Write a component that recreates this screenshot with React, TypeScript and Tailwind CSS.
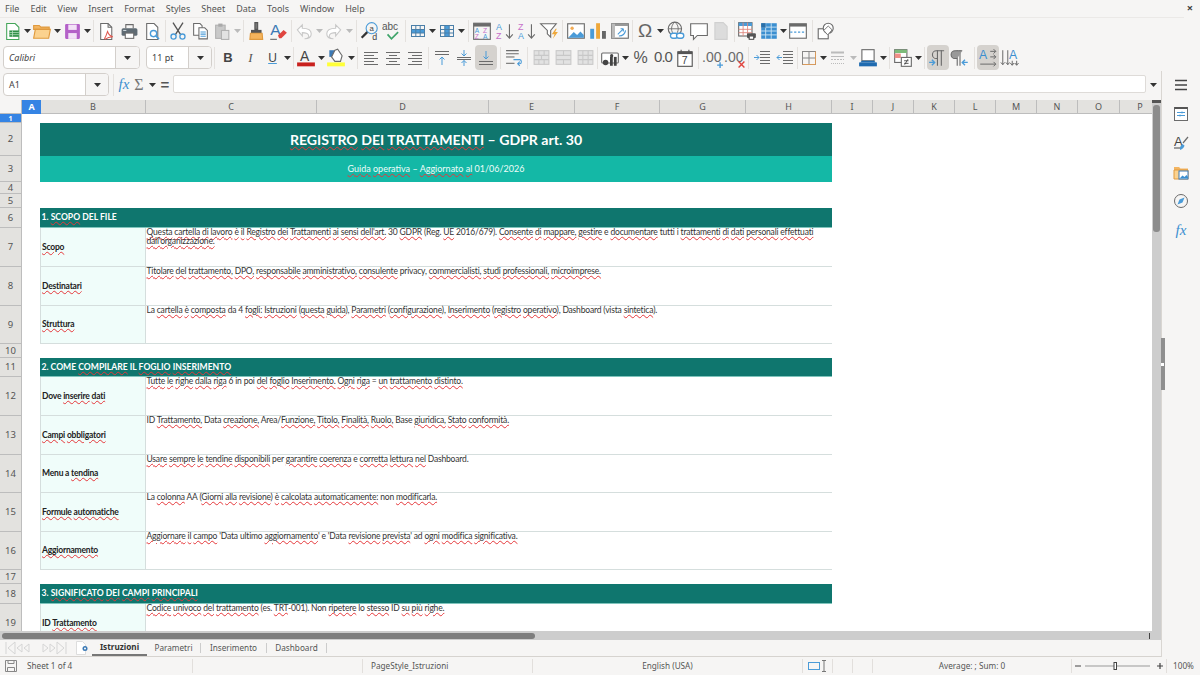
import type { ReactNode } from 'react';

// spell-checked text: {word} gets the red wavy underline
function Spell({ text }: { text: string }) {
  const parts = text.split(/(\{[^}]*\})/);
  return (
    <>
      {parts.map((p, i) =>
        p.startsWith('{') ? (
          <span key={i} className="underline decoration-wavy decoration-[#e5383b] decoration-[1px] underline-offset-[1px]">
            {p.slice(1, -1)}
          </span>
        ) : (
          <span key={i}>{p}</span>
        ),
      )}
    </>
  );
}

function Ic({ children, s = 18 }: { children: ReactNode; s?: number }) {
  return (
    <svg width={s} height={s} viewBox="0 0 18 18" fill="none" strokeWidth="1">
      {children}
    </svg>
  );
}

function Caret({ c = '#333' }: { c?: string }) {
  return (
    <svg width="7" height="4" viewBox="0 0 7 4">
      <path d="M0 0h7L3.5 4z" fill={c} />
    </svg>
  );
}

function Tool({ children, w = 'w-[22px]', on }: { children: ReactNode; w?: string; on?: boolean }) {
  return (
    <div className={`${w} h-[25px] shrink-0 flex items-center justify-center rounded-[4px] ${on ? 'bg-[#d5d2ce]' : ''}`}>
      {children}
    </div>
  );
}

function Arrow({ w = 'w-[8px]', c }: { w?: string; c?: string }) {
  return (
    <div className={`${w} h-[25px] shrink-0 flex items-center justify-center`}>
      <Caret c={c} />
    </div>
  );
}

function Sep({ w }: { w: string }) {
  return (
    <div className={`${w} h-[25px] shrink-0 flex items-center justify-center`}>
      <div className="w-px h-[22px] bg-[#e4e1de]" />
    </div>
  );
}

// ── icon drawings ───────────────────────────────────────────────────────
const G = '#6b6b6b';
const B = '#4a9bd8';

function Lines({ ys, x1 = 2, x2 = 16, c = G }: { ys: number[]; x1?: number; x2?: number; c?: string }) {
  return <path d={ys.map((y) => `M${x1} ${y + 0.5}H${x2}`).join('')} stroke={c} />;
}

function GridIc({ fill, c = G }: { fill?: ReactNode; c?: string }) {
  return (
    <Ic>
      {fill}
      <rect x="2.5" y="3.5" width="13" height="11" stroke={c} />
      <path d="M2.5 7.5h13M2.5 11h13M6.8 3.5v11M11.2 3.5v11" stroke={c} />
    </Ic>
  );
}

const NewSheet = () => (
  <Ic s={19}>
    <path d="M3.5 1.5h8l3.500 3.500v11.500h-11.500z" stroke="#43a558" fill="#fff" />
    <rect x="6" y="8" width="9" height="6" fill="#2f8f46" />
    <path d="M6 10h9M6 12h9M9 8v6" stroke="#bde3c6" strokeWidth=".7" />
  </Ic>
);
const Folder = () => (
  <Ic s={20}>
    <path d="M1.500 4h5l1.500 1.500h7.500v2h-14z" fill="#f3b562" stroke="#e09a3e" />
    <path d="M1.500 15.500l1.500-8h13.500l-1.500 8z" fill="#fbd28f" stroke="#e09a3e" />
  </Ic>
);
const Save = () => (
  <Ic s={19}>
    <rect x="2" y="2" width="14" height="14" rx="1" fill="#b461c8" />
    <rect x="5" y="2.500" width="8" height="5" fill="#f3e2f7" />
    <rect x="5" y="10.500" width="8" height="5.500" fill="#f3e2f7" />
  </Ic>
);
const Pdf = () => (
  <Ic s={19}>
    <path d="M3.500 1.500h7l3.500 3.500v11.500h-10.500z" stroke={G} fill="#fff" />
    <path d="M10.500 1.500v3.500h3.500" stroke={G} />
    <path d="M7 16c2-3 2.500-6 3-7 1 3 2.500 4.500 5 5-3 0-5 .5-7.500 2.500" stroke="#e0584f" />
  </Ic>
);
const Printer = () => (
  <Ic s={19}>
    <path d="M5.500 6V2.500h7V6" stroke={G} />
    <rect x="1.500" y="6" width="15" height="7" rx="1.500" fill="#5f6b73" />
    <rect x="5" y="10.500" width="8" height="5" fill="#fff" stroke={G} />
    <path d="M3 8h3" stroke="#cfd8dc" />
  </Ic>
);
const Preview = () => (
  <Ic s={19}>
    <path d="M3.500 1.500h7l3.500 3.500v11.500h-10.500z" stroke={G} fill="#fff" />
    <circle cx="10" cy="11" r="3" stroke={B} strokeWidth="1.300" />
    <path d="M12.200 13.200l3 3" stroke={B} strokeWidth="1.500" />
  </Ic>
);
const Cut = () => (
  <Ic s={20}>
    <path d="M4.500 1.500l7 11M13.500 1.500l-7 11" stroke="#555" strokeWidth="1.200" />
    <circle cx="5" cy="14" r="2.300" stroke={B} strokeWidth="1.200" />
    <circle cx="13" cy="14" r="2.300" stroke={B} strokeWidth="1.200" />
  </Ic>
);
const Copy = () => (
  <Ic s={19}>
    <path d="M2.500 1.500h6l2 2v9h-8z" stroke={G} fill="#fff" />
    <path d="M7.500 5.500h5.500l2.500 2.500v8h-8z" stroke={G} fill="#fff" />
    <Lines ys={[9, 11, 13]} x1={9} x2={14} c={B} />
  </Ic>
);
const Paste = () => (
  <Ic s={19}>
    <rect x="2.500" y="3" width="9" height="12.500" fill="#c9c9c9" stroke="#b0b0b0" />
    <rect x="5" y="1.500" width="4" height="3" fill="#aaa" />
    <rect x="8" y="8" width="7" height="8.500" fill="#e2e2e2" stroke="#b0b0b0" />
  </Ic>
);
const Brush = () => (
  <Ic s={20}>
    <path d="M8 1.500h2.500v6H8z" fill="#777" stroke="#555" />
    <path d="M4.500 8h9.500v3h-9.500z" fill="#555" />
    <path d="M4 11h10.500l.5 5.500h-11.500z" fill="#f5b45c" stroke="#e09a3e" />
  </Ic>
);
const Clear = () => (
  <Ic s={20}>
    <text x="2" y="13" fontSize="14" fontFamily="Liberation Sans" fill="#3b79b5">A</text>
    <path d="M2 16.500h6" stroke={G} />
    <path d="M9 13l5-5 3 2.500-5 5h-2z" fill="#e0453f" />
  </Ic>
);
const Undo = () => (
  <Ic s={20}>
    <path d="M3 8l4.500-4.500v3c5 0 8 1.500 8 5s-2.500 4.500-6 4.500c3 0 4.500-1.500 3.500-3.500-.8-1.500-3-2-5.500-2v3z" stroke="#c8c8c8" fill="#fff" />
  </Ic>
);
const Redo = () => (
  <Ic s={20}>
    <path d="M15 8l-4.500-4.500v3c-5 0-8 1.500-8 5s2.500 4.500 6 4.500c-3 0-4.500-1.500-3.500-3.500.8-1.500 3-2 5.500-2v3z" stroke="#c8c8c8" fill="#fff" />
  </Ic>
);
const Find = () => (
  <Ic s={20}>
    <circle cx="10.500" cy="6.500" r="5" stroke={B} />
    <path d="M6.500 10l-5 5" stroke="#333" strokeWidth="2" />
    <text x="8.500" y="9" fontSize="7" fontFamily="Liberation Sans" fill="#444">a</text>
    <text x="11" y="17" fontSize="8" fontFamily="Liberation Sans" fill="#444">d</text>
  </Ic>
);
const SpellIc = () => (
  <Ic s={20}>
    <text x="0" y="8" fontSize="9" fontFamily="Liberation Sans" fill="#555">abc</text>
    <path d="M5 12l3.500 4 6-6" stroke="#3fa46a" strokeWidth="1.500" />
  </Ic>
);
const Rows = () => <GridIc fill={<rect x="2.500" y="7.500" width="13" height="3.500" fill={B} />} c="#4b7fa8" />;
const Cols = () => <GridIc fill={<rect x="6.800" y="3.500" width="4.400" height="11" fill={B} />} c="#4b7fa8" />;
const Sort = () => (
  <Ic s={20}>
    <rect x="1.500" y="2" width="15" height="14.500" stroke={G} />
    <rect x="1.500" y="2" width="15" height="3" fill={G} />
    <text x="2.500" y="11" fontSize="6" fontFamily="Liberation Sans" fill={B}>A</text>
    <text x="2.500" y="16" fontSize="6" fontFamily="Liberation Sans" fill="#c670c9">Z</text>
    <text x="10" y="11" fontSize="6" fontFamily="Liberation Sans" fill="#c670c9">Z</text>
    <text x="10" y="16" fontSize="6" fontFamily="Liberation Sans" fill={B}>A</text>
  </Ic>
);
const SortAsc = ({ up }: { up: boolean }) => (
  <Ic s={20}>
    <text x="1" y="8" fontSize="8" fontFamily="Liberation Sans" fill={up ? B : '#c670c9'}>{up ? 'A' : 'Z'}</text>
    <text x="1" y="16" fontSize="8" fontFamily="Liberation Sans" fill={up ? '#c670c9' : B}>{up ? 'Z' : 'A'}</text>
    <path d="M13 3v12M10 12l3 3.500 3-3.500" stroke={G} />
  </Ic>
);
const Filter = () => (
  <Ic s={20}>
    <path d="M1.500 2.500h14l-5 6v6l-3-3v-3z" stroke={G} fill="#fff" />
    <path d="M15 7l-3.500 5h2.500l-1.500 4 4.500-6h-2.500l1.500-3z" fill="#efa83a" />
  </Ic>
);
const Picture = () => (
  <Ic s={20}>
    <rect x="1.500" y="2.500" width="15" height="13" stroke={G} fill="#fff" />
    <circle cx="5.500" cy="6.500" r="1.500" fill="#f2ab55" />
    <path d="M2 15l5-5 3 2.500 3-3 3 3v2.500z" fill={B} />
  </Ic>
);
const Chart = () => (
  <Ic s={20}>
    <rect x="2" y="7" width="3.500" height="9" fill={B} />
    <rect x="7.300" y="2" width="3.500" height="14" fill="#efa83a" />
    <rect x="12.600" y="9" width="3.500" height="7" fill="#666" />
  </Ic>
);
const Pivot = () => (
  <Ic s={20}>
    <rect x="1.500" y="2.500" width="15" height="13" stroke={G} fill="#fff" />
    <rect x="1.500" y="2.500" width="15" height="2" fill="#999" />
    <rect x="1.500" y="2.500" width="3" height="13" fill="#bbb" />
    <path d="M7 12l5-5M12 7h-2.500M12 7v2.500M8 13.500c3.500 0 5.500-1.500 6-5" stroke={B} />
  </Ic>
);
const Link = () => (
  <Ic s={20}>
    <circle cx="8" cy="7" r="6" stroke={G} />
    <path d="M2 7h12M8 1c-4 3-4 9 0 12M8 1c4 3 4 9 0 12" stroke={G} strokeWidth=".8" />
    <rect x="4" y="11" width="6.500" height="4.500" rx="2.200" stroke={B} fill="#fff" strokeWidth="1.200" />
    <rect x="9.500" y="11" width="6.500" height="4.500" rx="2.200" stroke={B} fill="#fff" strokeWidth="1.200" />
  </Ic>
);
const Comment = () => (
  <Ic s={20}>
    <path d="M1.500 2.500h15v10.500h-9l-3.500 3.500v-3.500h-2.500z" stroke={G} fill="#fff" />
  </Ic>
);
const Headers = () => (
  <Ic s={20}>
    <path d="M3.500 1.500h7.500l3.500 3.500v11.500h-11z" fill="#dcdcdc" stroke="#d0d0d0" />
  </Ic>
);
const PrintArea = () => (
  <Ic s={20}>
    <rect x="1.500" y="1.500" width="12" height="12" stroke={G} fill="#fff" />
    <rect x="1.500" y="1.500" width="12" height="3" fill={B} />
    <path d="M1.500 7.500h12M1.500 10.500h12M5.500 1.500v12M9.500 1.500v12" stroke="#e08a80" strokeWidth=".8" />
    <rect x="9" y="11" width="8" height="4.500" rx="1" fill="#555" />
    <rect x="11" y="13.500" width="4" height="3" fill="#fff" stroke="#555" />
  </Ic>
);
const Freeze = () => (
  <Ic s={20}>
    <rect x="2" y="2" width="14" height="14" fill="#3b8fd0" />
    <path d="M2 5.500h14M2 9h14M2 12.500h14M6 2v14M11 2v14" stroke="#cfe6f6" strokeWidth=".8" />
    <path d="M2 2h4v4h-4z" fill="#2a6fa8" />
  </Ic>
);
const Split = () => (
  <Ic s={20}>
    <rect x="1.500" y="2.500" width="15" height="13" stroke={G} fill="#fff" />
    <rect x="1.500" y="2.500" width="15" height="2.500" fill={G} />
    <path d="M2 10h14" stroke={B} strokeDasharray="2 1.500" />
  </Ic>
);
const Shapes = () => (
  <Ic s={20}>
    <rect x="2" y="7" width="9" height="9" stroke={G} fill="#fff" />
    <circle cx="11" cy="6.500" r="4.500" stroke={G} fill="#fff" />
    <path d="M7 8.500l4-4 3.500 3.500-4 4.500z" stroke={G} fill="#fff" strokeWidth=".8" />
  </Ic>
);

const FontColor = () => (
  <Ic s={20}>
    <text x="3.500" y="11.500" fontSize="12.500" fontFamily="Liberation Sans" fill="#444">A</text>
    <rect x="1" y="13" width="16" height="3.500" fill="#c9211e" />
  </Ic>
);
const Highlight = () => (
  <Ic s={20}>
    <path d="M3 2h5v6h-5z" fill="#3b79b5" />
    <path d="M8 2l2.500-1 4 6-1.500 5h-5l-3-4z" stroke={G} fill="#fff" />
    <rect x="1" y="13" width="16" height="3.500" fill="#ffff38" />
  </Ic>
);
const AlignL = ({ a }: { a: 'l' | 'c' | 'r' }) => {
  const ys = [3, 6, 9, 12, 15];
  return (
    <Ic>
      <path
        d={ys
          .map((y, i) => {
            const short = i % 2 === 1;
            if (a === 'l') return `M2 ${y + 0.5}H${short ? 12 : 16}`;
            if (a === 'r') return `M${short ? 6 : 2} ${y + 0.5}H16`;
            return `M${short ? 5 : 2} ${y + 0.5}H${short ? 13 : 16}`;
          })
          .join('')}
        stroke={G}
      />
    </Ic>
  );
};
const VTop = () => (
  <Ic>
    <Lines ys={[2, 5]} />
    <path d="M9 16V8M6.500 10.500L9 8l2.500 2.500" stroke={B} />
  </Ic>
);
const VMid = () => (
  <Ic>
    <Lines ys={[8, 10]} />
    <path d="M9 1v6M6.500 4.500L9 7l2.500-2.500M9 17v-5.500M6.500 14L9 11.500l2.500 2.500" stroke={B} />
  </Ic>
);
const VBot = () => (
  <Ic>
    <Lines ys={[12, 15]} />
    <path d="M9 2v8M6.500 7.500L9 10l2.500-2.500" stroke={B} />
  </Ic>
);
const Wrap = () => (
  <Ic s={19}>
    <Lines ys={[2, 5]} x1={1} x2={13} />
    <Lines ys={[8]} x1={1} x2={9} />
    <Lines ys={[14]} x1={1} x2={9} />
    <path d="M8 11h6c2 0 2 4 0 4h-1.500M14 13l-2 2 2 2" stroke={B} />
  </Ic>
);
const Merge = ({ v }: { v: number }) => (
  <Ic s={19}>
    <rect x="2" y="2.500" width="14" height="13" fill="#e2e2e2" stroke="#c8c8c8" />
    <path d="M2 7h14M2 11h14" stroke="#c8c8c8" />
    {v === 0 && <path d="M6.500 2.500v4.500M11.500 2.500v4.500M9 7v4M6.500 11v4.500M11.500 11v4.500" stroke="#c8c8c8" />}
    {v === 1 && <path d="M9 2.500v4.500M9 11v4.500" stroke="#c8c8c8" />}
    {v === 2 && <path d="M6.500 2.500v13M11.500 2.500v13" stroke="#c8c8c8" />}
  </Ic>
);
const Currency = () => (
  <Ic s={20}>
    <rect x="1.500" y="4.500" width="15" height="9" rx="1" stroke={G} fill="#fff" />
    <circle cx="5" cy="13" r="2.500" fill="#444" />
    <rect x="9" y="8" width="2.500" height="8" fill="#444" />
    <rect x="12.500" y="8" width="2.500" height="8" fill="#444" />
    <circle cx="10.500" cy="7" r="1.500" fill="#444" />
  </Ic>
);
const DateIc = () => (
  <Ic s={20}>
    <rect x="2.500" y="3.500" width="13" height="13" stroke="#555" fill="#fff" />
    <rect x="2.500" y="3" width="13" height="2.500" fill="#555" />
    <path d="M5.500 1.500v3M12.500 1.500v3" stroke="#555" />
    <text x="6" y="14.500" fontSize="9.500" fontFamily="Liberation Sans" fill="#444">7</text>
  </Ic>
);
const Dec = ({ add }: { add: boolean }) => (
  <Ic s={21}>
    <text x="0" y="13" fontSize="12" fontFamily="Liberation Sans" fill={G}>.00</text>
    {add ? (
      <path d="M13 15.500h5M15.500 13v5" stroke={B} strokeWidth="1.200" />
    ) : (
      <path d="M12.500 12.500l5 5M17.500 12.500l-5 5" stroke="#e0453f" strokeWidth="1.200" />
    )}
  </Ic>
);
const Indent = ({ out }: { out?: boolean }) => (
  <Ic>
    <Lines ys={[2, 5, 8, 11, 14]} x1={7} x2={17} />
    {out ? <path d="M6 8.500H1M3.500 6L1 8.500 3.500 11" stroke={B} /> : <path d="M1 8.500h5M3.500 6L6 8.500 3.500 11" stroke={B} />}
  </Ic>
);
const Borders = () => (
  <Ic>
    <rect x="2.500" y="2.500" width="13" height="13" stroke="#888" />
    <path d="M9 2.500v13M2.500 9h13" stroke="#888" />
    <path d="M2.500 15.500h13v-13" stroke="#d99a5b" />
  </Ic>
);
const BorderStyle = () => (
  <Ic>
    <path d="M2 3.500h13" stroke="#bbb" strokeWidth="2" />
    <path d="M2 7.500h13" stroke="#bbb" />
    <path d="M2 10.500h13" stroke="#bbb" strokeDasharray="2 1" />
    <path d="M2 14.500h13" stroke="#bbb" strokeDasharray="1 1" />
  </Ic>
);
const BorderColor = () => (
  <Ic s={20}>
    <rect x="3.500" y="1.500" width="11" height="10" stroke={G} fill="#fff" />
    <rect x="1" y="13" width="16" height="3.500" fill="#1f6bb0" />
    <path d="M2 13l1.500-1.500h11L16 13z" fill="#1f6bb0" />
  </Ic>
);
const Cond = () => (
  <Ic s={20}>
    <rect x="1.500" y="1.500" width="11" height="11.500" stroke={G} fill="#fff" />
    <rect x="1.500" y="1.500" width="11" height="3" fill="#7dbb7a" />
    <rect x="1.500" y="5" width="5.500" height="4" fill="#ef8f86" />
    <rect x="7.500" y="8.500" width="9" height="8" stroke={G} fill="#fff" />
    <path d="M10 11.500h4M10 13.800h4M13.500 10l-3 5" stroke="#444" strokeWidth=".8" />
  </Ic>
);
const Ltr = () => (
  <Ic s={20}>
    <path d="M8.500 2v14M12 2v14" stroke={G} />
    <path d="M14.500 2.500H7.500a3.500 3.500 0 0 0 0 7h1" stroke={G} />
    <path d="M1 13h5M3.500 10.500L6 13l-2.500 2.500" stroke={B} strokeWidth="1.200" />
  </Ic>
);
const Rtl = () => (
  <Ic s={20}>
    <path d="M6.500 2v14M9 2v14" stroke={G} />
    <path d="M11 2.500H4.500a3.500 3.500 0 0 0 0 7h2" fill="#999" stroke={G} />
    <path d="M16 13h-5M13.500 10.500L11 13l2.500 2.500" stroke={B} strokeWidth="1.200" />
  </Ic>
);
const TextH = () => (
  <Ic s={20}>
    <text x="1" y="10" fontSize="11" fontFamily="Liberation Sans" fill="#3b8fd0">A</text>
    <path d="M11 3h5M14 1l2 2-2 2M11 8h5M14 6l2 2-2 2M2 14.500h14M14 12.500l2 2-2 2" stroke={G} strokeWidth=".9" />
  </Ic>
);
const TextV = () => (
  <Ic s={20}>
    <text x="8" y="10" fontSize="11" fontFamily="Liberation Sans" fill="#3b8fd0">A</text>
    <path d="M2.500 2v13M.8 13l1.700 2 1.700-2M7 2v13M5.300 13L7 15l1.700-2M11 11.500v4M9.300 13.500l1.700 2 1.700-2M15 11.500v4M13.300 13.500l1.700 2 1.700-2" stroke={G} strokeWidth=".9" />
  </Ic>
);

function ComboBox({ text, w, tail, italic }: { text: string; w: string; tail: string; italic?: boolean }) {
  return (
    <div className={`${w} h-[23px] shrink-0 flex border border-[#d3cfcb] rounded-[4px] bg-white overflow-hidden`}>
      <div className={`flex-1 flex items-center pl-[5px] text-[9px] text-[#444] ${italic ? 'italic' : ''}`}>{text}</div>
      <div className={`${tail} border-l border-[#d3cfcb] bg-[#f6f5f4] flex items-center justify-center`}>
        <Caret />
      </div>
    </div>
  );
}

// ── sheet ───────────────────────────────────────────────────────────────
const columns = [
  { n: 'B', w: 'w-[105px]' },
  { n: 'C', w: 'w-[171px]' },
  { n: 'D', w: 'w-[172px]' },
  { n: 'E', w: 'w-[86px]' },
  { n: 'F', w: 'w-[85px]' },
  { n: 'G', w: 'w-[86px]' },
  { n: 'H', w: 'w-[86px]' },
  { n: 'I', w: 'w-[41px]' },
  { n: 'J', w: 'w-[41px]' },
  { n: 'K', w: 'w-[41px]' },
  { n: 'L', w: 'w-[41px]' },
  { n: 'M', w: 'w-[41px]' },
  { n: 'N', w: 'w-[41px]' },
  { n: 'O', w: 'w-[42px]' },
  { n: 'P', w: 'w-[41px]' },
];

function Row({ n, h, children, active }: { n: number; h: string; children?: ReactNode; active?: boolean }) {
  return (
    <div className={`${h} flex shrink-0`}>
      <div
        className={`w-[22px] shrink-0 flex items-center justify-center border-b border-r border-[#bdbdbd] font-['Noto_Sans',sans-serif] ${
          active ? 'bg-[#3584e4] text-white font-bold text-[7px] leading-[7px]' : 'bg-[#e3e2df] text-[#555] text-[9.500px] leading-[10px]'
        }`}
      >
        {n}
      </div>
      <div className="w-[18px] shrink-0" />
      {children}
    </div>
  );
}

function Section({ n, text, h = 'h-[19px]' }: { n: number; text: string; h?: string }) {
  return (
    <Row n={n} h={h}>
      <div className="w-[792px] bg-[#0f766e] text-white font-bold text-[8.600px] flex items-center pl-[1.500px] border-b border-[#7fc4bc]">
        <span className="whitespace-pre">
          <Spell text={text} />
        </span>
      </div>
    </Row>
  );
}

function Info({ n, h = 'h-[39px]', label, text }: { n: number; h?: string; label: string; text: string }) {
  return (
    <Row n={n} h={h}>
      <div className="w-[106px] shrink-0 bg-[#f0fdfa] border-l border-r border-b border-[#d5dedd] flex items-center pl-px text-[8.500px] tracking-[-0.2px] font-bold text-[#222] whitespace-pre">
        <span>
          <Spell text={label} />
        </span>
      </div>
      <div className="w-[686px] shrink-0 border-b border-[#d5dedd] pl-[0.500px] text-[8.500px] tracking-[-0.18px] leading-[9px] text-[#333] whitespace-pre-line">
        <Spell text={text} />
      </div>
    </Row>
  );
}

export default function App() {
  return (
    <div className="w-[1200px] h-[675px] overflow-hidden bg-[#f6f5f4] flex flex-col font-['Noto_Sans',sans-serif] text-[#444]">
      {/* ── Menu bar ─────────────────────────────────────────────────────── */}
      <div className="h-[17px] shrink-0 flex items-center gap-[11px] pl-[5px] text-[9px] text-[#555]">
        {['File', 'Edit', 'View', 'Insert', 'Format', 'Styles', 'Sheet', 'Data', 'Tools', 'Window', 'Help'].map((m) => (
          <span key={m}>{m}</span>
        ))}
        <span className="ml-auto mr-[7px] text-[11px] font-bold text-[#444]">×</span>
      </div>

      {/* ── Standard toolbar ─────────────────────────────────────────────── */}
      <div className="h-[27px] shrink-0 flex items-center pl-[1px] border-t border-[#ebe9e7] mr-[16px]">
        <Tool><NewSheet /></Tool><Arrow />
        <Tool><Folder /></Tool><Arrow />
        <Tool><Save /></Tool><Arrow />
        <Sep w="w-[4px]" />
        <Tool w="w-[23px]"><Pdf /></Tool>
        <Tool w="w-[23px]"><Printer /></Tool>
        <Tool w="w-[23px]"><Preview /></Tool>
        <Sep w="w-[3px]" />
        <Tool><Cut /></Tool>
        <Tool><Copy /></Tool>
        <Tool><Paste /></Tool><Arrow c="#bbb" />
        <Sep w="w-[4px]" />
        <Tool><Brush /></Tool>
        <Tool><Clear /></Tool>
        <Sep w="w-[4px]" />
        <Tool><Undo /></Tool><Arrow c="#bbb" />
        <Tool><Redo /></Tool><Arrow c="#bbb" />
        <Sep w="w-[6px]" />
        <Tool><Find /></Tool>
        <Tool><SpellIc /></Tool>
        <Sep w="w-[4px]" />
        <Tool><Rows /></Tool><Arrow w="w-[7px]" />
        <Tool><Cols /></Tool><Arrow w="w-[7px]" />
        <Sep w="w-[6px]" />
        <Tool><Sort /></Tool>
        <Tool w="w-[23px]"><SortAsc up /></Tool>
        <Tool><SortAsc up={false} /></Tool>
        <Tool><Filter /></Tool>
        <Sep w="w-[5px]" />
        <Tool><Picture /></Tool>
        <Tool><Chart /></Tool>
        <Tool><Pivot /></Tool>
        <Sep w="w-[3px]" />
        <Tool><span className="text-[19px] text-[#666] font-['Liberation_Sans']">Ω</span></Tool><Arrow />
        <Tool w="w-[24px]"><Link /></Tool>
        <Tool><Comment /></Tool>
        <Tool><Headers /></Tool>
        <Sep w="w-[4px]" />
        <Tool><PrintArea /></Tool>
        <Tool><Freeze /></Tool><Arrow w="w-[7px]" />
        <Tool><Split /></Tool>
        <Sep w="w-[6px]" />
        <Tool><Shapes /></Tool>
      </div>

      {/* ── Formatting toolbar ───────────────────────────────────────────── */}
      <div className="h-[27px] shrink-0 flex items-center pl-[3px]">
        <ComboBox text="Calibri" w="w-[137px]" tail="w-[24px]" italic />
        <div className="w-[6px] shrink-0" />
        <ComboBox text="11 pt" w="w-[66px]" tail="w-[23px]" />
        <Sep w="w-[5px]" />
        <Tool><span className="text-[13px] font-bold text-[#444] font-['Liberation_Sans']">B</span></Tool>
        <Tool w="w-[23px]"><span className="text-[13px] italic text-[#555] font-['Liberation_Serif']">I</span></Tool>
        <Tool w="w-[21px]"><span className="text-[12px] text-[#444] underline decoration-[#4a9bd8] font-['Liberation_Sans']">U</span></Tool><Arrow />
        <Sep w="w-[4px]" />
        <Tool><FontColor /></Tool><Arrow />
        <Tool><Highlight /></Tool><Arrow />
        <Sep w="w-[5px]" />
        <Tool><AlignL a="l" /></Tool>
        <Tool><AlignL a="c" /></Tool>
        <Tool><AlignL a="r" /></Tool>
        <Sep w="w-[5px]" />
        <Tool><VTop /></Tool>
        <Tool><VMid /></Tool>
        <Tool on><VBot /></Tool>
        <Sep w="w-[6px]" />
        <Tool><Wrap /></Tool>
        <Sep w="w-[5px]" />
        <Tool><Merge v={0} /></Tool>
        <Tool><Merge v={1} /></Tool>
        <Tool><Merge v={2} /></Tool>
        <Sep w="w-[3px]" />
        <Tool><Currency /></Tool><Arrow />
        <Tool w="w-[23px]"><span className="text-[16px] text-[#555] font-['Liberation_Sans']">%</span></Tool>
        <Tool><span className="text-[15px] tracking-[-1px] text-[#555] font-['Liberation_Sans']">0.0</span></Tool>
        <Tool><DateIc /></Tool>
        <Sep w="w-[5px]" />
        <Tool><Dec add /></Tool>
        <Tool><Dec add={false} /></Tool>
        <Sep w="w-[6px]" />
        <Tool><Indent /></Tool>
        <Tool w="w-[23px]"><Indent out /></Tool>
        <Sep w="w-[2px]" />
        <Tool><Borders /></Tool><Arrow w="w-[7px]" />
        <Tool><BorderStyle /></Tool><Arrow c="#bbb" />
        <Tool><BorderColor /></Tool><Arrow />
        <Sep w="w-[5px]" />
        <Tool><Cond /></Tool><Arrow />
        <Sep w="w-[5px]" />
        <Tool on><Ltr /></Tool>
        <Tool><Rtl /></Tool>
        <Sep w="w-[6px]" />
        <Tool on><TextH /></Tool>
        <Tool><TextV /></Tool>
      </div>

      {/* ── Work area + sidebar ──────────────────────────────────────────── */}
      <div className="flex-1 min-h-0 flex">
        <div className="w-[1161px] shrink-0 flex flex-col">
          {/* formula bar */}
          <div className="h-[29px] shrink-0 flex items-start pt-[2px] pl-[3px]">
            <ComboBox text="A1" w="w-[106px]" tail="w-[23px]" />
            <div className="w-[8px] shrink-0 flex justify-center h-[23px] items-center">
              <div className="w-px h-[22px] bg-[#e4e1de]" />
            </div>
            <div className="w-[14px] text-center text-[15px] italic text-[#3b8fd0] font-['Liberation_Serif'] leading-[23px]">fx</div>
            <div className="w-[16px] text-center text-[16px] text-[#777] font-['Liberation_Serif'] leading-[23px]">Σ</div>
            <div className="w-[11px] h-[23px] flex items-center justify-center"><Caret /></div>
            <div className="w-[14px] text-center text-[15px] text-[#555] font-['Liberation_Sans'] leading-[23px] font-bold">=</div>
            <div className="w-[973px] h-[18px] mt-[2px] ml-[1px] bg-white border border-[#dedbd8] rounded-[2px]" />
            <div className="w-[15px] h-[23px] flex items-center justify-center"><Caret /></div>
          </div>

          {/* grid + vertical scrollbar */}
          <div className="flex-1 min-h-0 flex">
            <div className="w-[1152px] shrink-0 flex flex-col overflow-hidden bg-white font-['Lato',sans-serif]">
              <div className="h-[14px] shrink-0 flex text-[9px] font-['Noto_Sans',sans-serif]">
                <div className="w-[22px] shrink-0 bg-[#f6f5f4] border-b border-r border-[#bdbdbd]" />
                <div className="w-[19px] shrink-0 bg-[#3584e4] text-white font-bold flex items-center justify-center">A</div>
                {columns.map((c) => (
                  <div
                    key={c.n}
                    className={`${c.w} shrink-0 bg-[#e3e2df] text-[#555] border-r border-b border-[#bdbdbd] flex items-center justify-center`}
                  >
                    {c.n}
                  </div>
                ))}
              </div>

              <div className="flex-1 min-h-0 overflow-hidden">
                <Row n={1} h="h-[9px]" active />
                <Row n={2} h="h-[33px]">
                  <div className="w-[792px] bg-[#0f766e] text-white font-bold text-[14.100px] flex items-center justify-center">
                    <span className="whitespace-pre">
                      <Spell text="{REGISTRO} {DEI} {TRATTAMENTI} – GDPR art. 30" />
                    </span>
                  </div>
                </Row>
                <Row n={3} h="h-[26px]">
                  <div className="w-[792px] bg-[#14b8a6] text-[#ecfdf9] text-[9px] flex items-center justify-center">
                    <span className="whitespace-pre">
                      <Spell text="{Guida} {operativa} – {Aggiornato} {al} 01/06/2026" />
                    </span>
                  </div>
                </Row>
                <Row n={4} h="h-[12px]" />
                <Row n={5} h="h-[14px]" />
                <Section n={6} h="h-[20px]" text="1. {SCOPO} DEL FILE" />
                <Info
                  n={7}
                  label="{Scopo}"
                  text={"{Questa} {cartella} {di} {lavoro} {è} {il} {Registro} {dei} {Trattamenti} {ai} {sensi} {dell'art.} 30 {GDPR} (Reg. {UE} 2016/679). {Consente} {di} {mappare,} {gestire} e {documentare} tutti i {trattamenti} {di} {dati} {personali} {effettuati}\n{dall'organizzazione.}"}
                />
                <Info
                  n={8}
                  label="{Destinatari}"
                  text="{Titolare} {del} {trattamento,} {DPO,} {responsabile} {amministrativo,} {consulente} privacy, {commercialisti,} {studi} {professionali,} {microimprese.}"
                />
                <Info
                  n={9}
                  h="h-[38px]"
                  label="{Struttura}"
                  text="La {cartella} {è} {composta} da 4 {fogli:} {Istruzioni} ({questa} {guida}), {Parametri} ({configurazione}), {Inserimento} ({registro} {operativo}), Dashboard (vista {sintetica})."
                />
                <Row n={10} h="h-[14px]" />
                <Section n={11} text="2. COME {COMPILARE} IL {FOGLIO} {INSERIMENTO}" />
                <Info
                  n={12}
                  label="Dove {inserire} {dati}"
                  text="{Tutte} {le} {righe} {dalla} {riga} 6 in poi {del} {foglio} {Inserimento.} {Ogni} {riga} = {un} {trattamento} {distinto.}"
                />
                <Info
                  n={13}
                  label="{Campi} {obbligatori}"
                  text="ID {Trattamento,} Data {creazione,} Area/{Funzione,} {Titolo,} {Finalità,} {Ruolo,} Base {giuridica,} {Stato} {conformità.}"
                />
                <Info
                  n={14}
                  h="h-[38px]"
                  label="Menu a {tendina}"
                  text="{Usare} {sempre} {le} {tendine} {disponibili} per {garantire} {coerenza} e {corretta} {lettura} {nel} Dashboard."
                />
                <Info
                  n={15}
                  label="{Formule} {automatiche}"
                  text="La {colonna} AA ({Giorni} {alla} {revisione}) {è} {calcolata} {automaticamente:} non {modificarla.}"
                />
                <Info
                  n={16}
                  h="h-[38px]"
                  label="{Aggiornamento}"
                  text="{Aggiornare} {il} {campo} 'Data ultimo {aggiornamento}' e 'Data {revisione} {prevista}' ad {ogni} {modifica} {significativa.}"
                />
                <Row n={17} h="h-[14px]" />
                <Section n={18} h="h-[20px]" text="3. {SIGNIFICATO} {DEI} {CAMPI} {PRINCIPALI}" />
                <Info
                  n={19}
                  label="ID {Trattamento}"
                  text="{Codice} {univoco} {del} {trattamento} (es. {TRT}-001). Non {ripetere} lo {stesso} ID {su} {più} {righe.}"
                />
              </div>
            </div>

            <div className="w-[9px] shrink-0 bg-[#cdcdcd] flex flex-col items-center">
              <div className="w-full h-[3px] bg-[#555] mb-[2px]" />
              <div className="w-[7px] h-[127px] rounded-[3px] bg-[#8c8c8c]" />
            </div>
          </div>

          {/* horizontal scrollbar */}
          <div className="h-[9px] shrink-0 bg-[#cdcdcd] flex items-center pl-[2px] pr-[11px] justify-between">
            <div className="w-[533px] h-[6px] rounded-[3px] bg-[#7e7e7e]" />
            <div className="w-px h-[6px] bg-[#444]" />
          </div>

          {/* sheet tabs */}
          <div className="h-[17px] shrink-0 flex items-center border-b border-[#d6d3cf] text-[8.200px] text-[#555]">
            <div className="w-[71px] shrink-0 flex items-center justify-center">
              <svg width="62" height="14" viewBox="0 0 62 14" fill="none" stroke="#d5d5d5">
                <path d="M1 1v12M10 1L3 7l7 6zM17 3l-5 4 5 4zM24 3l-5 4 5 4zM38 3l5 4-5 4zM45 3l5 4-5 4zM52 1l7 6-7 6zM61 1v12" />
              </svg>
            </div>
            <div className="w-[21px] shrink-0 flex items-center justify-center">
              <svg width="14" height="14" viewBox="0 0 14 14">
                <path d="M1.500 .5h6l3 3v10h-9z" fill="#fff" stroke="#ddd" />
                <circle cx="10" cy="7.500" r="2.500" fill="#3b79b5" />
                <circle cx="10" cy="7.500" r="1" fill="#fff" />
              </svg>
            </div>
            <div className="w-[55px] h-full flex items-center justify-center font-bold text-[#333] border-b-[2px] border-[#777]">Istruzioni</div>
            <div className="w-[54px] flex items-center justify-center border-r border-[#ccc] h-[10px]">Parametri</div>
            <div className="w-[66px] flex items-center justify-center border-r border-[#ccc] h-[10px]">Inserimento</div>
            <div className="w-[60px] flex items-center justify-center border-r border-[#ccc] h-[10px]">Dashboard</div>
          </div>
        </div>

        {/* sidebar */}
        <div className="relative flex-1 border-l border-[#d9d6d2] flex flex-col items-center pt-[5px] gap-[11px]">
          <div className="absolute -left-px top-[267px] w-[4px] h-[52px] bg-[#8f8f8f] flex items-center">
            <div className="w-[3px] h-[3px] bg-white" />
          </div>
          <Ic>
            <path d="M3 4.500h12M3 9h12M3 13.500h12" stroke="#444" strokeWidth="1.500" />
          </Ic>
          <Ic>
            <rect x="2.500" y="2.500" width="13" height="13" stroke={G} fill="#fff" />
            <rect x="2.500" y="2" width="13" height="2" fill="#555" />
            <path d="M5 7.500h8M5 10.500h8" stroke={B} />
            <path d="M10 6.500v2M8 9.500v2" stroke={B} />
          </Ic>
          <Ic>
            <text x="2" y="12" fontSize="13" fontFamily="Liberation Sans" fill="#444">A</text>
            <path d="M2 14h7" stroke="#444" />
            <path d="M16 3l-5 6" stroke={G} strokeWidth="1.200" />
            <path d="M8 16c-.5-3 1-5 2.500-6l2 1.500c-.5 2-2 4-4.500 4.500z" fill={B} />
          </Ic>
          <Ic>
            <path d="M2 4h5l1.500 1.500h7.500v2h-14z" fill="#f3b562" />
            <path d="M2 7h14v9h-14z" fill="#fbd28f" stroke="#e09a3e" />
            <rect x="7" y="8" width="9" height="8" fill="#fff" stroke="#3b79b5" />
            <path d="M7.500 15.500l3-3 2 1.500 2-2 1.500 2v1.500z" fill="#3b8fd0" />
          </Ic>
          <Ic>
            <circle cx="9" cy="9" r="6.500" stroke={G} />
            <path d="M12.500 5.500L10.500 10.500 5.500 12.500 7.500 7.500z" fill={B} />
          </Ic>
          <span className="text-[15px] italic leading-[18px] text-[#3b8fd0] font-['Liberation_Serif']">fx</span>
        </div>
      </div>

      {/* ── Status bar ───────────────────────────────────────────────────── */}
      <div className="h-[18px] shrink-0 flex items-center text-[8.200px] text-[#555]">
        <div className="w-[22px] flex items-center justify-center">
          <svg width="12" height="12" viewBox="0 0 12 12" fill="none" stroke="#888">
            <path d="M.5.5h11v11H.5zM3 .5v3h6v-3M2.500 11.500v-4h7v4" />
          </svg>
        </div>
        <div className="w-[171px] h-[14px] flex items-center pl-[5px] border-r border-[#e2dfdc]">Sheet 1 of 4</div>
        <div className="w-[170px] h-[14px] border-r border-[#e2dfdc]" />
        <div className="w-[170px] h-[14px] flex items-center pl-[8px] border-r border-[#e2dfdc]">PageStyle_Istruzioni</div>
        <div className="w-[270px] h-[14px] flex items-center justify-center border-r border-[#e2dfdc]">English (USA)</div>
        <div className="w-[30px] h-[14px] flex items-center justify-center border-r border-[#e2dfdc]">
          <svg width="20" height="12" viewBox="0 0 20 12" fill="none">
            <rect x=".5" y="2.500" width="11" height="7" stroke="#4a9bd8" />
            <path d="M14 .5h4M16 .5v11M14 11.500h4" stroke="#777" />
          </svg>
        </div>
        <div className="w-[20px] h-[14px] border-r border-[#e2dfdc]" />
        <div className="w-[20px] h-[14px] border-r border-[#e2dfdc]" />
        <div className="w-[199px] h-[14px] flex items-center justify-center border-r border-[#e2dfdc]">Average: ; Sum: 0</div>
        <div className="w-[95px] h-[14px] flex items-center justify-center gap-[3px] border-r border-[#e2dfdc]">
          <svg width="88" height="10" viewBox="0 0 88 10" fill="none" stroke="#444">
            <path d="M0 5h6M82 5h6M85 2v6" strokeWidth="1.200" />
            <path d="M10 5h65" stroke="#999" />
            <rect x="39" y="1.500" width="2.500" height="7" fill="#fff" />
          </svg>
        </div>
        <div className="flex-1 text-center">100%</div>
      </div>
    </div>
  );
}
